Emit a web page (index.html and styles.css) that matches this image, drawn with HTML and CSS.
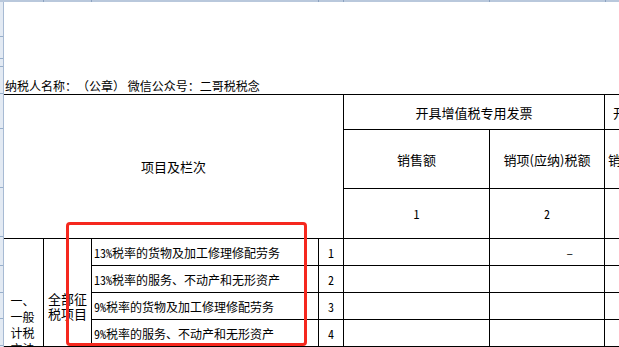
FILE: index.html
```html
<!DOCTYPE html>
<html lang="zh-CN">
<head>
<meta charset="utf-8">
<title>增值税纳税申报表</title>
<link rel="stylesheet" href="styles.css">
</head>
<body>
<div class="sheet">
  <div class="colhdr">
    <span class="ch w43"></span><span class="ch w48"></span><span class="ch w227"></span><span class="ch w25"></span><span class="ch w146"></span><span class="ch w116"></span><span class="ch rest"></span>
  </div>
  <div class="rowhdr">
    <span class="rh h35"></span><span class="rh h22"></span><span class="rh h8"></span><span class="rh h27"></span><span class="rh h35"></span><span class="rh h59"></span><span class="rh h49"></span><span class="rh h29"></span><span class="rh h27"></span><span class="rh h26"></span><span class="rh h27"></span>
  </div>
  <div class="content">
    <div class="title"><span>纳税人名称：（公章） 微信公众号：二哥税税念</span></div>
    <div class="table">
      <div class="cell hd items">项目及栏次</div>
      <div class="cell hd span2">开具增值税专用发票</div>
      <div class="cell hd left pl8">开具其他发票</div>
      <div class="cell hd">销售额</div>
      <div class="cell hd">销项(应纳)税额</div>
      <div class="cell hd left pl3">销售额</div>
      <div class="cell hd num">1</div>
      <div class="cell hd num">2</div>
      <div class="cell"></div>

      <div class="cell method">一、一般计税方法</div>
      <div class="cell scope">全部征税项目</div>
      <div class="cell item">13%税率的货物及加工修理修配劳务</div>
      <div class="cell no">1</div>
      <div class="cell"></div>
      <div class="cell dash">–</div>
      <div class="cell"></div>

      <div class="cell item">13%税率的服务、不动产和无形资产</div>
      <div class="cell no">2</div>
      <div class="cell"></div>
      <div class="cell"></div>
      <div class="cell"></div>

      <div class="cell item">9%税率的货物及加工修理修配劳务</div>
      <div class="cell no">3</div>
      <div class="cell"></div>
      <div class="cell"></div>
      <div class="cell"></div>

      <div class="cell item">9%税率的服务、不动产和无形资产</div>
      <div class="cell no">4</div>
      <div class="cell"></div>
      <div class="cell"></div>
      <div class="cell"></div>
    </div>
  </div>
  <div class="redbox"></div>
</div>
</body>
</html>
```

FILE: styles.css
```css
* { box-sizing: border-box; }

html, body {
  margin: 0;
  padding: 0;
  background: #fff;
}

body {
  font-family: "Noto Sans CJK SC", "Noto Sans", sans-serif;
  color: #000;
  text-spacing-trim: space-all;
}

.sheet {
  position: relative;
  width: 619px;
  height: 347px;
  overflow: hidden;
  display: grid;
  grid-template-columns: 4px 1fr;
  grid-template-rows: 2px 1fr;
  background: #fff;
}

/* Excel column header strip */
.colhdr {
  grid-column: 1 / -1;
  grid-row: 1;
  display: flex;
  background: #b9c8dc;
}
.ch {
  flex: none;
  height: 2px;
  border-right: 1px solid #8ba2c0;
}
.ch.w43 { width: 44px; }
.ch.w48 { width: 48px; }
.ch.w227 { width: 227px; }
.ch.w25 { width: 25px; }
.ch.w146 { width: 146px; }
.ch.w116 { width: 116px; }
.ch.rest { flex: 1; border-right: 0; }

/* Excel row header strip */
.rowhdr {
  grid-column: 1;
  grid-row: 2;
  display: flex;
  flex-direction: column;
  background: #e3eaf3;
  border-right: 1px solid #a7bad3;
}
.rh {
  flex: none;
  border-bottom: 1px solid #98afcb;
}
.h35 { height: 35px; }
.h22 { height: 22px; }
.h8 { height: 8px; }
.h27 { height: 27px; }
.h59 { height: 59px; }
.h49 { height: 49px; }
.h29 { height: 29px; }
.h26 { height: 26px; }

.content {
  grid-column: 2;
  grid-row: 2;
  display: flex;
  flex-direction: column;
  min-width: 0;
}

.title {
  height: 92px;
  display: flex;
  align-items: flex-end;
  padding: 0 0 1px 1px;
  font-size: 12px;
  line-height: 14px;
  white-space: nowrap;
}

.table {
  display: grid;
  grid-template-columns: 40px 48px 227px 25px 146px 115px 100px;
  grid-template-rows: 35px 59px 50px 27px 27px 27px 27px;
  border-top: 1px solid #000;
  width: max-content;
}

.cell {
  border-right: 1px solid #000;
  border-bottom: 1px solid #000;
  font-size: 12px;
  white-space: nowrap;
}

.hd {
  font-size: 13px;
  display: flex;
  align-items: center;
  justify-content: center;
}
.hd.left { justify-content: flex-start; }
.pl8 { padding-left: 8px; }
.pl3 { padding-left: 3px; }
.num {
  font-size: 12px;
  font-feature-settings: "hwid";
}

.items {
  grid-column: 1 / 5;
  grid-row: 1 / 4;
}
.span2 { grid-column: 5 / 7; }

.method {
  grid-column: 1;
  grid-row: 4 / 8;
  white-space: normal;
  text-align: center;
  padding: 54px 8px 0 6px;
  font-size: 12px;
  line-height: 16px;
  word-break: break-all;
}

.scope {
  grid-column: 2;
  grid-row: 4 / 8;
  white-space: normal;
  text-align: center;
  padding: 52px 4px 0 4px;
  font-size: 13px;
  line-height: 15px;
  word-break: break-all;
}

.item {
  display: flex;
  align-items: center;
  padding-left: 2px;
  font-feature-settings: "hwid";
}

.no {
  display: flex;
  align-items: center;
  justify-content: center;
  font-feature-settings: "hwid";
}

.dash {
  display: flex;
  align-items: center;
  justify-content: flex-end;
  padding-right: 31px;
}

.redbox {
  position: absolute;
  left: 66px;
  top: 222px;
  width: 241px;
  height: 124px;
  border: 3px solid #f5281e;
  border-radius: 4px;
  pointer-events: none;
}
```
